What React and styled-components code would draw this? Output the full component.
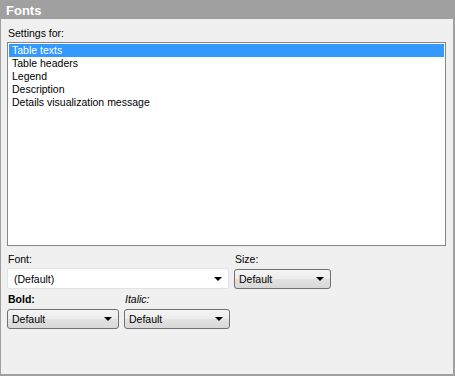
import React from 'react';
import styled, { createGlobalStyle } from 'styled-components';

const Global = createGlobalStyle`
  html, body { margin: 0; padding: 0; background: #ffffff; }
  body { font-family: "Liberation Sans", Arial, sans-serif; font-size: 10.5px; color: #000; }
`;

const settings = ['Table texts', 'Table headers', 'Legend', 'Description', 'Details visualization message'];

const Panel = styled.div`
  width: 455px;
  height: 376px;
  box-sizing: border-box;
  border: 1px solid #a0a0a0;
  border-right-width: 2px;
  border-bottom-width: 2px;
  background: #f0f0f0;
  display: flex;
  flex-direction: column;
`;

const Header = styled.div`
  height: 18px;
  background: #a0a0a0;
  color: #fff;
  font-weight: bold;
  font-size: 13px;
  line-height: 19px;
  padding-left: 5px;
`;

const Body = styled.div`
  padding: 7px 7px 0 6px;
  display: flex;
  flex-direction: column;
`;

const Label = styled.div`
  height: 14px;
  line-height: 14px;
  padding-left: 1px;
  font-weight: ${p => (p.$bold ? 'bold' : 'normal')};
  font-style: ${p => (p.$italic ? 'italic' : 'normal')};
`;

const ListBox = styled.div`
  margin-top: 2px;
  height: 200px;
  border: 1px solid #828790;
  background: #fff;
  padding: 1px;
`;

const Item = styled.div`
  height: 13px;
  line-height: 13px;
  padding-left: 3px;
  background: ${p => (p.$selected ? '#3399ff' : 'transparent')};
  color: ${p => (p.$selected ? '#fff' : '#000')};
`;

const Row = styled.div`
  display: flex;
  gap: 5px;
  margin-top: ${p => p.$top || 0}px;
`;

const Field = styled.div`
  display: flex;
  flex-direction: column;
  width: ${p => p.$w}px;
`;

const Combo = styled.div`
  margin-top: ${p => (p.$flat ? 2 : 3)}px;
  height: ${p => (p.$flat ? 21 : 20)}px;
  box-sizing: border-box;
  display: flex;
  align-items: center;
  justify-content: space-between;
  padding: 0 6px 0 ${p => (p.$flat ? 6 : 4)}px;
  border: 1px solid ${p => (p.$flat ? '#e3e3e3' : '#707070')};
  border-radius: ${p => (p.$flat ? 2 : 3)}px;
  background: ${p => (p.$flat ? '#fff' : 'linear-gradient(#f4f4f4, #ececec 50%, #e2e2e2 51%, #d8d8d8)')};
`;

const Arrow = styled.span`
  width: 0;
  height: 0;
  border-left: 4px solid transparent;
  border-right: 4px solid transparent;
  border-top: 4px solid #000;
`;

const Select = ({ value, flat }) => (
  <Combo $flat={flat}>
    <span>{value}</span>
    <Arrow />
  </Combo>
);

export default function App() {
  return (
    <>
      <Global />
      <Panel>
        <Header>Fonts</Header>
        <Body>
          <Label>Settings for:</Label>
          <ListBox>
            {settings.map((s, i) => (
              <Item key={s} $selected={i === 0}>{s}</Item>
            ))}
          </ListBox>
          <Row $top={6}>
            <Field $w={222}>
              <Label>Font:</Label>
              <Select flat value="(Default)" />
            </Field>
            <Field $w={97}>
              <Label>Size:</Label>
              <Select value="Default" />
            </Field>
          </Row>
          <Row $top={3}>
            <Field $w={112}>
              <Label $bold>Bold:</Label>
              <Select value="Default" />
            </Field>
            <Field $w={106}>
              <Label $italic>Italic:</Label>
              <Select value="Default" />
            </Field>
          </Row>
        </Body>
      </Panel>
    </>
  );
}
